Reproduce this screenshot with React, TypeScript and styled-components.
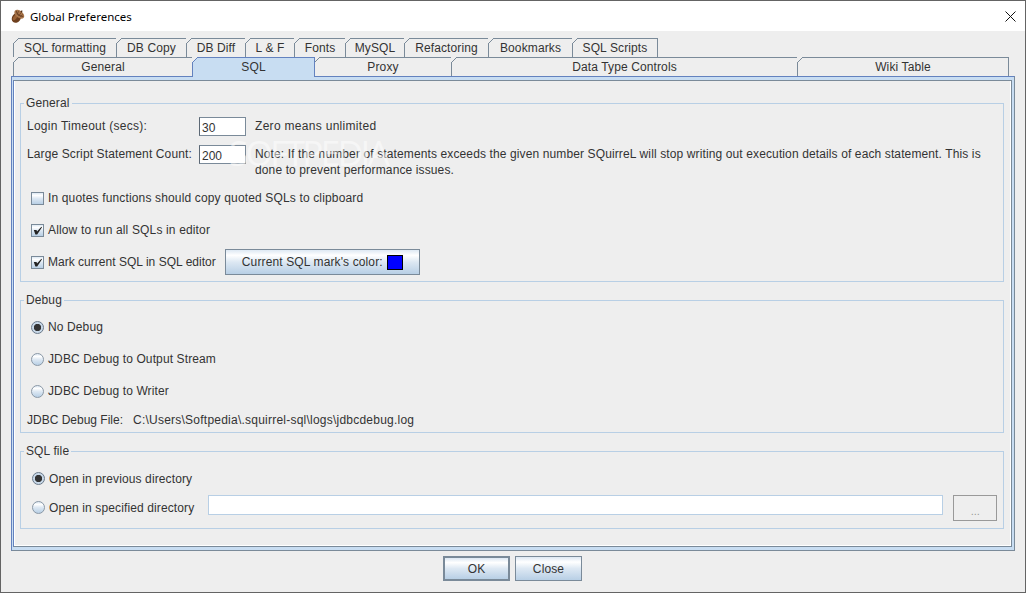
import styled, { createGlobalStyle } from "styled-components";

const GlobalStyle = createGlobalStyle`
    html, body {
        margin: 0;
        padding: 0;
        overflow: hidden;
        background: #eeeeee;
    }
    body {
        font-family: "Liberation Sans", Arial, sans-serif;
        font-size: 12px;
        letter-spacing: 0.12px;
        color: #333333;
    }
`;

const METAL_GRADIENT = "linear-gradient(180deg, #dde8f3 0%, #ffffff 22%, #dde8f3 50%, #b8cfe5 100%)";

const Window = styled.div`
    position: relative;
    box-sizing: border-box;
    width: 1026px;
    height: 593px;
    border: 1px solid #646464;
    display: flex;
    flex-direction: column;
    background: #eeeeee;
    overflow: hidden;
`;

const TitleBar = styled.div`
    height: 30px;
    flex: none;
    background: #ffffff;
    display: flex;
    align-items: center;
    padding: 0 9px;
`;

const AppIcon = styled.svg`
    width: 15px;
    height: 15px;
    margin-right: 5px;
    flex: none;
`;

const Title = styled.span`
    font-family: "Noto Sans", "Open Sans", sans-serif;
    font-size: 11.5px;
    letter-spacing: 0;
    color: #000000;
    flex: 1;
`;

const CloseIcon = styled.svg`
    width: 11px;
    height: 11px;
    flex: none;
`;

const Body = styled.div`
    flex: 1;
    display: flex;
    flex-direction: column;
    padding: 7px 10px 0;
`;

const TabRow = styled.div`
    display: flex;
    align-items: flex-start;
    padding-left: 2px;
    height: 19px;
`;

type TabProps = {
    $w: number;
    $active?: boolean;
    $last?: boolean;
};

const Tab = styled.div<TabProps>`
    position: relative;
    box-sizing: border-box;
    flex: none;
    width: ${(p) => p.$w}px;
    height: ${(p) => (p.$active ? "20px" : "19px")};
    margin-right: ${(p) => (p.$active ? "-1px" : "0")};
    z-index: ${(p) => (p.$active ? 2 : "auto")};
    background: ${(p) => (p.$active ? "#c8ddf2" : "#eeeeee")};
    border-top: 1px solid ${(p) => (p.$active ? "#6382bf" : "#7a8a99")};
    border-left: 1px solid ${(p) => (p.$active ? "#6382bf" : "#7a8a99")};
    border-right: ${(p) => (p.$active ? "1px solid #6382bf" : p.$last ? "1px solid #7a8a99" : "none")};
    display: flex;
    align-items: center;
    justify-content: center;
    padding-bottom: ${(p) => (p.$active ? "1px" : "0")};

    &::before {
        content: "";
        position: absolute;
        top: -1px;
        left: -1px;
        width: 6px;
        height: 6px;
        background: linear-gradient(
            135deg,
            #eeeeee 0,
            #eeeeee 3.7px,
            ${(p) => (p.$active ? "#6382bf" : "#7a8a99")} 3.7px,
            ${(p) => (p.$active ? "#6382bf" : "#7a8a99")} 4.7px,
            transparent 4.7px
        );
    }
`;

const Pane = styled.div`
    position: relative;
    z-index: 1;
    background: #c8ddf2;
    border: 1px solid #7a8a99;
    border-top-color: #6382bf;
    border-left-color: #6382bf;
    padding: 3px 2px 3px 1px;
`;

const PaneFrame = styled.div`
    border: 1px solid #7a8a99;
    border-left-color: #6382bf;
`;

const PaneInner = styled.div`
    background: #eeeeee;
    border: 1px solid #ffffff;
    border-top: none;
    padding: 15px 6px 16px 5px;
    display: flex;
    flex-direction: column;
    gap: 11px;
`;

const Group = styled.fieldset`
    margin: 0;
    padding: 0;
    min-width: 0;
    border: 1px solid #b8cfe5;
`;

const GroupTitle = styled.legend`
    margin-left: 3px;
    padding: 1px 2px;
    line-height: 12px;
`;

const FormGrid = styled.div`
    display: grid;
    grid-template-columns: 172px 47px 1fr;
    row-gap: 9px;
    padding: 7px 0 0 6px;
`;

const FieldLabel = styled.label<{ $spacing?: number }>`
    padding-top: 1px;
    line-height: 17px;
    letter-spacing: ${(p) => p.$spacing ?? 0.12}px;
`;

const NumberInput = styled.input`
    box-sizing: border-box;
    width: 47px;
    height: 19px;
    border: 1px solid #7a8a99;
    border-left-color: #5c6875;
    background: #ffffff;
    color: #333333;
    font: inherit;
    letter-spacing: 0;
    padding: 2px 2px 0;
    outline: none;
`;

const Note = styled.div<{ $spacing?: number }>`
    padding: 1px 0 0 9px;
    line-height: 16px;
    letter-spacing: ${(p) => p.$spacing ?? 0.12}px;
`;

const OptionList = styled.div`
    margin-top: 4px;
    padding-bottom: 3px;
    letter-spacing: 0.15px;
`;

const OptionRow = styled.div<{ $h?: number; $indent?: number }>`
    display: flex;
    align-items: center;
    height: ${(p) => p.$h ?? 32}px;
    padding-left: ${(p) => p.$indent ?? 10}px;
`;

const CheckBox = styled.span`
    box-sizing: border-box;
    width: 13px;
    height: 13px;
    flex: none;
    border: 1px solid #7a8a99;
    background: ${METAL_GRADIENT};
    display: flex;
    align-items: center;
    justify-content: center;
    margin-right: 4px;
`;

const CheckMark = styled.svg`
    width: 11px;
    height: 11px;
`;

const Radio = styled.span<{ $on?: boolean }>`
    box-sizing: border-box;
    width: 13px;
    height: 13px;
    flex: none;
    border-radius: 50%;
    border: 1px solid ${(p) => (p.$on ? "#6b7a8a" : "#8a98a6")};
    background: ${(p) =>
        p.$on
            ? "radial-gradient(circle at 50% 50%, #333333 0, #333333 3.4px, #c8d8e8 3.9px)"
            : METAL_GRADIENT};
    margin-right: 4px;
`;

const MetalButton = styled.button<{ $w: number; $h?: number; $default?: boolean }>`
    box-sizing: border-box;
    width: ${(p) => p.$w}px;
    height: ${(p) => p.$h ?? 25}px;
    flex: none;
    border: ${(p) => (p.$default ? "2px" : "1px")} solid #7a8a99;
    background: ${METAL_GRADIENT};
    color: #333333;
    font: inherit;
    letter-spacing: 0.12px;
    padding: 0;
    display: flex;
    align-items: center;
    justify-content: center;
`;

const ColorSwatch = styled.span`
    box-sizing: border-box;
    width: 16px;
    height: 15px;
    margin-left: 4px;
    border: 1px solid #000000;
    background: #0000ff;
`;

const MarkLabel = styled.span`
    letter-spacing: 0.02px;
`;

const MarkButtonSlot = styled.div`
    margin-left: 9px;
    display: flex;
`;

const FileLine = styled.div`
    height: 25px;
    padding-left: 6px;
    display: flex;
    align-items: center;
    white-space: pre;
    letter-spacing: 0;
`;

const FilePath = styled.span`
    letter-spacing: 0.23px;
`;

const DebugList = styled.div`
    margin-top: 4px;
`;

const SqlFileList = styled.div`
    margin-top: 6px;
    padding-bottom: 6px;
`;

const PathField = styled.input`
    box-sizing: border-box;
    width: 735px;
    height: 20px;
    margin: 2px 0 0 14px;
    align-self: flex-start;
    border: 1px solid #b8cfe5;
    background: #ffffff;
    outline: none;
`;

const BrowseButton = styled.button`
    box-sizing: border-box;
    width: 44px;
    height: 26px;
    margin: 2px 0 0 10px;
    align-self: flex-start;
    border: 1px solid #999999;
    background: #eeeeee;
    color: #999999;
    font: inherit;
    font-size: 11px;
    padding: 5px 0 0;
`;

const Footer = styled.div`
    display: flex;
    justify-content: center;
    gap: 5px;
    padding: 5px 1px 0 0;
`;

const Watermark = styled.span`
    position: absolute;
    left: 228px;
    top: 130px;
    z-index: 3;
    font-family: "Open Sans", sans-serif;
    font-size: 35px;
    line-height: 44px;
    letter-spacing: -2.6px;
    color: #ffffff;
    opacity: 0.5;
    pointer-events: none;
    white-space: nowrap;
`;

const topTabs = [
    { label: "SQL formatting", w: 103 },
    { label: "DB Copy", w: 70 },
    { label: "DB Diff", w: 59 },
    { label: "L & F", w: 49 },
    { label: "Fonts", w: 51 },
    { label: "MySQL", w: 59 },
    { label: "Refactoring", w: 84 },
    { label: "Bookmarks", w: 84 },
    { label: "SQL Scripts", w: 86 },
];

const mainTabs = [
    { label: "General", w: 179 },
    { label: "SQL", w: 123, active: true },
    { label: "Proxy", w: 137 },
    { label: "Data Type Controls", w: 346 },
    { label: "Wiki Table", w: 212 },
];

const Tick = () => (
    <CheckMark viewBox="0 0 11 11">
        <path d="M1.8 5 L4.6 5 L5 6.6 L9.4 1.8 L10 2.3 L5.2 9.6 L3.4 9.6 Z" fill="#222222" />
    </CheckMark>
);

const Acorn = () => (
    <AppIcon viewBox="0 0 15 15">
        <g transform="rotate(38 7.5 7.5)">
            <ellipse cx="7.5" cy="9.3" rx="4.3" ry="5.3" fill="#6e3f1e" />
            <ellipse cx="6.2" cy="9.5" rx="1.6" ry="3.4" fill="#9a6236" />
            <ellipse cx="7.5" cy="4.6" rx="5.6" ry="3.5" fill="#a9764a" />
            <path d="M3 4 Q7.5 7.4 12 4" stroke="#6b4226" strokeWidth="1" fill="none" />
            <path d="M5 2.6 L6 6 M8 1.6 L8 6.4 M10.4 2.6 L9.8 6" stroke="#6b4226" strokeWidth="0.7" />
            <rect x="7" y="0" width="1.2" height="2" fill="#4f2c12" />
        </g>
    </AppIcon>
);

const App = () => {
    return (
        <Window>
            <GlobalStyle />
            <TitleBar>
                <Acorn />
                <Title>Global Preferences</Title>
                <CloseIcon viewBox="0 0 11 11">
                    <path d="M0.5 0.5 L10.5 10.5 M10.5 0.5 L0.5 10.5" stroke="#111111" strokeWidth="1" />
                </CloseIcon>
            </TitleBar>
            <Body>
                <TabRow>
                    {topTabs.map((t, i) => (
                        <Tab key={t.label} $w={t.w} $last={i === topTabs.length - 1}>
                            {t.label}
                        </Tab>
                    ))}
                </TabRow>
                <TabRow>
                    {mainTabs.map((t, i) => (
                        <Tab key={t.label} $w={t.w} $active={t.active} $last={i === mainTabs.length - 1}>
                            {t.label}
                        </Tab>
                    ))}
                </TabRow>
                <Pane>
                    <PaneFrame>
                        <PaneInner>
                            <Group>
                                <GroupTitle>General</GroupTitle>
                                <FormGrid>
                                    <FieldLabel $spacing={0.25}>Login Timeout (secs):</FieldLabel>
                                    <NumberInput defaultValue="30" />
                                    <Note $spacing={0.3}>Zero means unlimited</Note>
                                    <FieldLabel>Large Script Statement Count:</FieldLabel>
                                    <NumberInput defaultValue="200" />
                                    <Note>
                                        Note: If the number of statements exceeds the given number SQuirreL will stop writing out execution details of each statement. This is
                                        <br />
                                        done to prevent performance issues.
                                    </Note>
                                </FormGrid>
                                <OptionList>
                                    <OptionRow>
                                        <CheckBox />
                                        In quotes functions should copy quoted SQLs to clipboard
                                    </OptionRow>
                                    <OptionRow>
                                        <CheckBox>
                                            <Tick />
                                        </CheckBox>
                                        Allow to run all SQLs in editor
                                    </OptionRow>
                                    <OptionRow>
                                        <CheckBox>
                                            <Tick />
                                        </CheckBox>
                                        <MarkLabel>Mark current SQL in SQL editor</MarkLabel>
                                        <MarkButtonSlot>
                                            <MetalButton $w={195} $h={26}>
                                                Current SQL mark's color:
                                                <ColorSwatch />
                                            </MetalButton>
                                        </MarkButtonSlot>
                                    </OptionRow>
                                </OptionList>
                            </Group>
                            <Group>
                                <GroupTitle>Debug</GroupTitle>
                                <DebugList>
                                    <OptionRow>
                                        <Radio $on />
                                        No Debug
                                    </OptionRow>
                                    <OptionRow>
                                        <Radio />
                                        JDBC Debug to Output Stream
                                    </OptionRow>
                                    <OptionRow>
                                        <Radio />
                                        JDBC Debug to Writer
                                    </OptionRow>
                                    <FileLine>
                                        JDBC Debug File:   <FilePath>C:\Users\Softpedia\.squirrel-sql\logs\jdbcdebug.log</FilePath>
                                    </FileLine>
                                </DebugList>
                            </Group>
                            <Group>
                                <GroupTitle>SQL file</GroupTitle>
                                <SqlFileList>
                                    <OptionRow $h={29} $indent={11}>
                                        <Radio $on />
                                        Open in previous directory
                                    </OptionRow>
                                    <OptionRow $h={29} $indent={11}>
                                        <Radio />
                                        Open in specified directory
                                        <PathField />
                                        <BrowseButton>...</BrowseButton>
                                    </OptionRow>
                                </SqlFileList>
                            </Group>
                        </PaneInner>
                    </PaneFrame>
                </Pane>
                <Footer>
                    <MetalButton $w={67} $default>OK</MetalButton>
                    <MetalButton $w={67}>Close</MetalButton>
                </Footer>
            </Body>
            <Watermark>SOFTPEDIA</Watermark>
        </Window>
    );
};

export default App;
